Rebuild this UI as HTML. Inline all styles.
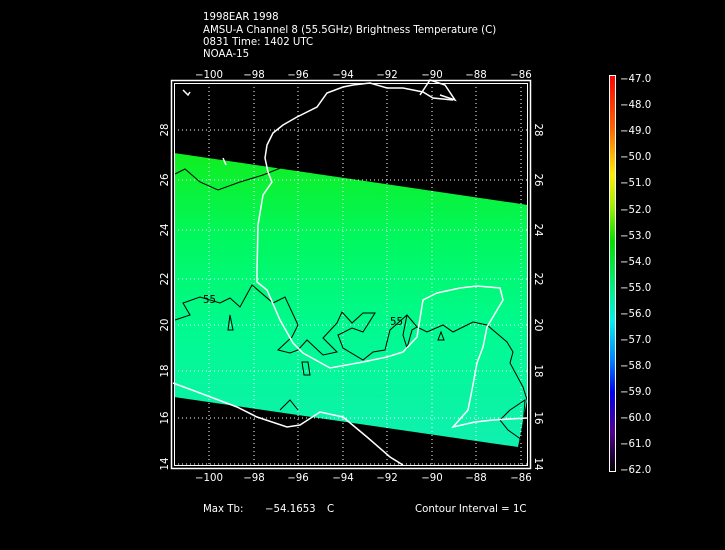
<!DOCTYPE html>
<html><head><meta charset="utf-8"><style>
html,body{margin:0;padding:0;background:#000;width:725px;height:550px;overflow:hidden}
svg{display:block}
text{font-family:"DejaVu Sans","Liberation Sans",sans-serif;fill:#fff;font-size:10.2px}
</style></head><body>
<svg width="725" height="550" viewBox="0 0 725 550">
<defs>
<linearGradient id="sw" x1="0" y1="0" x2="0" y2="1">
<stop offset="0" stop-color="#10ee20"/>
<stop offset="0.3" stop-color="#00f860"/>
<stop offset="0.6" stop-color="#00fa90"/>
<stop offset="1" stop-color="#10f0b0"/>
</linearGradient>
<linearGradient id="cb" x1="0" y1="0" x2="0" y2="1">
<stop offset="0" stop-color="#ff0000"/>
<stop offset="0.13" stop-color="#ff6000"/>
<stop offset="0.25" stop-color="#ffee00"/>
<stop offset="0.33" stop-color="#a0f000"/>
<stop offset="0.42" stop-color="#00e000"/>
<stop offset="0.55" stop-color="#00f090"/>
<stop offset="0.62" stop-color="#00f0f0"/>
<stop offset="0.72" stop-color="#0080ff"/>
<stop offset="0.8" stop-color="#0000f0"/>
<stop offset="0.9" stop-color="#500090"/>
<stop offset="1" stop-color="#000000"/>
</linearGradient>
</defs>
<text x="203" y="20">1998EAR 1998</text>
<text x="203" y="33">AMSU-A Channel 8 (55.5GHz) Brightness Temperature (C)</text>
<text x="203" y="45">0831 Time: 1402 UTC</text>
<text x="203" y="57">NOAA-15</text>

<polygon points="174,153 528,205 528,395 518,447 174,397" fill="url(#sw)"/>

<g stroke="#fff" stroke-width="1" stroke-dasharray="1,3" fill="none">
<line x1="209" y1="83" x2="209" y2="466"/><line x1="254" y1="83" x2="254" y2="466"/>
<line x1="298" y1="83" x2="298" y2="466"/><line x1="343" y1="83" x2="343" y2="466"/>
<line x1="387" y1="83" x2="387" y2="466"/><line x1="432" y1="83" x2="432" y2="466"/>
<line x1="476" y1="83" x2="476" y2="466"/><line x1="521" y1="83" x2="521" y2="466"/>
<line x1="174" y1="130" x2="528" y2="130"/><line x1="174" y1="180" x2="528" y2="180"/>
<line x1="174" y1="230" x2="528" y2="230"/><line x1="174" y1="279" x2="528" y2="279"/>
<line x1="174" y1="325" x2="528" y2="325"/><line x1="174" y1="371" x2="528" y2="371"/>
<line x1="174" y1="418" x2="528" y2="418"/><line x1="174" y1="464" x2="528" y2="464"/>
</g>

<g stroke="#000" stroke-width="1" fill="none">
<polyline points="175,174 185,169 200,182 218,190 240,182 263,175 283,167 297,168"/>
<polyline points="175,320 190,315 183,303 200,297 220,303 230,298 240,307 252,285 273,303 285,297 298,325 292,337 278,350 290,353 298,350 307,340 323,355 337,352 323,338 337,323 342,312 352,323 363,313 375,313 363,332 352,328 338,335 343,348 363,360 373,352 385,350 390,330 407,315 417,327 427,332 443,325 453,332 473,322 487,325 507,342 513,352 510,363 523,387 528,403"/>
<polyline points="407,315 403,335 407,348 412,330 417,327"/>
<polygon points="230,315 233,330 228,330"/>
<polygon points="302,362 308,362 310,375 304,375"/>
<polygon points="441,332 444,340 438,340"/>
<polyline points="280,410 290,400 298,410"/>
<polygon points="510,410 525,400 522,440 508,430 500,420"/>
</g>
<text x="203" y="303" font-size="9" style="fill:#000">55</text>
<text x="390" y="325" font-size="9" style="fill:#000">55</text>

<g stroke="#fff" stroke-width="1.5" fill="none">
<polyline points="453,100 433,98 423,92 403,88 387,88 370,83 353,85 343,87 327,93 317,107 297,117 283,125 273,133 267,145 265,158 268,172 272,182 263,195 258,225 257,272 257,282 267,290 280,320 293,343 303,353 330,368 363,362 387,357 403,352 417,337 423,300 437,293 460,288 477,286 500,288 503,300 487,327 483,347 477,363 472,390 468,410 453,427 475,422 493,420 527,418"/>
<polyline points="173,383 200,393 237,407 257,417 287,427 300,425 320,412 343,417 367,437 390,457 403,465"/>
<polyline points="420,95 430,80 445,85 455,100 440,95"/>
<polyline points="183,90 188,95 190,92"/>
<polyline points="223,158 226,165"/>
</g>

<rect x="171.5" y="80.5" width="359" height="388" fill="none" stroke="#fff" stroke-width="1.5"/>
<rect x="174.5" y="83.5" width="353" height="382" fill="none" stroke="#fff" stroke-width="1"/>

<g text-anchor="middle">
<text x="209" y="78">−100</text><text x="254" y="78">−98</text><text x="298" y="78">−96</text>
<text x="343" y="78">−94</text><text x="387" y="78">−92</text><text x="432" y="78">−90</text>
<text x="476" y="78">−88</text><text x="521" y="78">−86</text>
<text x="209" y="481">−100</text><text x="254" y="481">−98</text><text x="298" y="481">−96</text>
<text x="343" y="481">−94</text><text x="387" y="481">−92</text><text x="432" y="481">−90</text>
<text x="476" y="481">−88</text><text x="521" y="481">−86</text>
</g>
<g text-anchor="middle">
<text transform="translate(168,130) rotate(-90)">28</text>
<text transform="translate(168,180) rotate(-90)">26</text>
<text transform="translate(168,230) rotate(-90)">24</text>
<text transform="translate(168,279) rotate(-90)">22</text>
<text transform="translate(168,325) rotate(-90)">20</text>
<text transform="translate(168,371) rotate(-90)">18</text>
<text transform="translate(168,418) rotate(-90)">16</text>
<text transform="translate(168,464) rotate(-90)">14</text>
<text transform="translate(535,130) rotate(90)">28</text>
<text transform="translate(535,180) rotate(90)">26</text>
<text transform="translate(535,230) rotate(90)">24</text>
<text transform="translate(535,279) rotate(90)">22</text>
<text transform="translate(535,325) rotate(90)">20</text>
<text transform="translate(535,371) rotate(90)">18</text>
<text transform="translate(535,418) rotate(90)">16</text>
<text transform="translate(535,464) rotate(90)">14</text>
</g>

<text x="203" y="512">Max Tb:</text>
<text x="265" y="512">−54.1653</text>
<text x="327" y="512">C</text>
<text x="415" y="512">Contour Interval = 1C</text>

<rect x="609.5" y="75.5" width="6" height="396" fill="url(#cb)" stroke="#fff" stroke-width="1"/>
<g>
<text x="620" y="82">−47.0</text><text x="620" y="108">−48.0</text><text x="620" y="134">−49.0</text>
<text x="620" y="160">−50.0</text><text x="620" y="186">−51.0</text><text x="620" y="213">−52.0</text>
<text x="620" y="239">−53.0</text><text x="620" y="265">−54.0</text><text x="620" y="291">−55.0</text>
<text x="620" y="317">−56.0</text><text x="620" y="343">−57.0</text><text x="620" y="369">−58.0</text>
<text x="620" y="395">−59.0</text><text x="620" y="421">−60.0</text><text x="620" y="447">−61.0</text>
<text x="620" y="473">−62.0</text>
</g>
</svg>
</body></html>
